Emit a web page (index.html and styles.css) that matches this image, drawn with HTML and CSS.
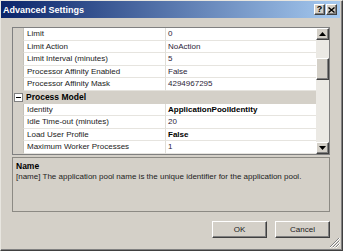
FILE: index.html
```html
<!DOCTYPE html>
<html lang="en">

<head>
    <meta charset="UTF-8">
    <title>Advanced Settings</title>
    <link rel="stylesheet" href="styles.css">
</head>

<body>
    <div class="window">
        <div class="titlebar">
            <span class="title">Advanced Settings</span>
            <div class="caption-btns">
                <span class="cap-btn help">?</span>
                <span class="cap-btn close">
                    <svg width="7" height="6" viewBox="0 0 7 6"><path d="M0.5 0.5 L6.5 5.5 M6.5 0.5 L0.5 5.5" stroke="#000" stroke-width="1.4" fill="none"/></svg>
                </span>
            </div>
        </div>

        <div class="body">
            <div class="grid">
                <div class="rows">
                    <div class="row"><span class="gutter"></span><span class="name">Limit</span><span class="value">0</span></div>
                    <div class="row"><span class="gutter"></span><span class="name">Limit Action</span><span class="value">NoAction</span></div>
                    <div class="row"><span class="gutter"></span><span class="name">Limit Interval (minutes)</span><span class="value">5</span></div>
                    <div class="row"><span class="gutter"></span><span class="name">Processor Affinity Enabled</span><span class="value">False</span></div>
                    <div class="row"><span class="gutter"></span><span class="name">Processor Affinity Mask</span><span class="value">4294967295</span></div>
                    <div class="row category">
                        <span class="gutter"><span class="toggle"></span></span>
                        <span class="cat-name">Process Model</span>
                    </div>
                    <div class="row"><span class="gutter"></span><span class="name">Identity</span><span class="value bold">ApplicationPoolIdentity</span></div>
                    <div class="row"><span class="gutter"></span><span class="name">Idle Time-out (minutes)</span><span class="value">20</span></div>
                    <div class="row"><span class="gutter"></span><span class="name">Load User Profile</span><span class="value bold">False</span></div>
                    <div class="row"><span class="gutter"></span><span class="name">Maximum Worker Processes</span><span class="value">1</span></div>
                </div>
                <div class="scrollbar">
                    <span class="sb-btn">
                        <svg width="7" height="4" viewBox="0 0 7 4"><path d="M3.5 0 L7 4 L0 4 Z" fill="#000"/></svg>
                    </span>
                    <div class="track">
                        <span class="thumb"></span>
                    </div>
                    <span class="sb-btn">
                        <svg width="7" height="4" viewBox="0 0 7 4"><path d="M0 0 L7 0 L3.5 4 Z" fill="#000"/></svg>
                    </span>
                </div>
            </div>

            <div class="desc">
                <h4>Name</h4>
                <p>[name] The application pool name is the unique identifier for the application pool.</p>
            </div>

            <div class="actions">
                <button class="btn">OK</button>
                <button class="btn">Cancel</button>
            </div>
        </div>

        <svg class="grip" width="11" height="11" viewBox="0 0 11 11">
            <path d="M10 1 L1 10 M10 4 L4 10 M10 7 L7 10" stroke="#808080" stroke-width="1" fill="none"/>
            <path d="M11 1 L1 11 M11 4 L4 11 M11 7 L7 11" stroke="#fff" stroke-width="1" fill="none"/>
        </svg>
    </div>
</body>

</html>
```

FILE: styles.css
```css
* {
    margin: 0;
    padding: 0;
    box-sizing: border-box;
}

body {
    background: #d4d0c8;
    font-family: "Liberation Sans", Arial, sans-serif;
    font-size: 8px;
    color: #222;
}

.window {
    position: relative;
    width: 343px;
    height: 251px;
    display: flex;
    flex-direction: column;
    background: #d4d0c8;
    border-top: 1px solid #e8e6e0;
    border-left: 1px solid #e8e6e0;
    border-right: 1px solid #404040;
    border-bottom: 1px solid #404040;
    padding: 0 2px 2px 0;
    box-shadow: inset -1px -1px #808080;
}

/* 标题栏 */
.titlebar {
    height: 17px;
    display: flex;
    align-items: center;
    justify-content: space-between;
    padding: 0 3px 0 2px;
    background: linear-gradient(to right, #0a246a, #a6caf0);
}

.title {
    color: #fff;
    font-weight: bold;
    font-size: 9px;
}

.caption-btns {
    display: flex;
    gap: 1px;
}

.cap-btn {
    width: 11px;
    height: 11px;
    display: flex;
    align-items: center;
    justify-content: center;
    background: #d4d0c8;
    border-top: 1px solid #fff;
    border-left: 1px solid #fff;
    border-right: 1px solid #404040;
    border-bottom: 1px solid #404040;
    box-shadow: inset -1px -1px #808080;
    font-weight: bold;
    font-size: 9px;
    color: #000;
    line-height: 1;
}

.body {
    flex: 1;
    padding: 9px 10px 0 11px;
}

/* 属性表格 */
.grid {
    height: 128px;
    display: flex;
    border: 1px solid #808080;
    background: #fff;
}

.rows {
    flex: 1;
    display: flex;
    flex-direction: column;
}

.row {
    height: 12.6px;
    display: grid;
    grid-template-columns: 10px 143px 1fr;
    align-items: center;
    line-height: 12px;
}

.gutter {
    height: 100%;
    background: #d4d0c8;
    display: flex;
    align-items: center;
    justify-content: center;
}

.name,
.value {
    height: 100%;
    padding-left: 3px;
    border-bottom: 1px solid #e6e4df;
    white-space: nowrap;
    overflow: hidden;
}

.name {
    border-left: 1px solid #c4c1b9;
    border-right: 1px solid #e0ded8;
}

.value {
    padding-left: 2px;
    color: #2c2438;
}

.bold {
    font-weight: bold;
    color: #000;
}

.row.category {
    background: #d4d0c8;
}

.cat-name {
    grid-column: 2 / 4;
    padding-left: 3px;
    font-weight: bold;
    font-size: 8.5px;
    color: #000;
}

.toggle {
    position: relative;
    width: 9px;
    height: 9px;
    border: 1px solid #808080;
    background: #fff;
}

.toggle::after {
    content: "";
    position: absolute;
    left: 1px;
    top: 3px;
    width: 5px;
    height: 1px;
    background: #000;
}

/* 滚动条 */
.scrollbar {
    width: 13px;
    display: flex;
    flex-direction: column;
    background: #ebe9e4;
}

.sb-btn,
.thumb {
    display: flex;
    align-items: center;
    justify-content: center;
    height: 12px;
    background: #d4d0c8;
    border-top: 1px solid #fff;
    border-left: 1px solid #fff;
    border-right: 1px solid #404040;
    border-bottom: 1px solid #404040;
    box-shadow: inset -1px -1px #808080;
}

.track {
    flex: 1;
    padding-top: 18px;
}

.thumb {
    height: 22px;
}

/* 说明区 */
.desc {
    height: 55px;
    margin-top: 2px;
    border: 1px solid #8c8a84;
    padding: 3px 3px;
}

.desc h4 {
    font-size: 8.5px;
    font-weight: bold;
    color: #000;
    line-height: 10px;
}

.desc p {
    margin-top: 1px;
    line-height: 10px;
    color: #222;
}

.actions {
    margin-top: 9px;
    display: flex;
    justify-content: flex-end;
    gap: 8px;
}

.btn {
    width: 55px;
    height: 17px;
    font-family: "Liberation Sans", Arial, sans-serif;
    font-size: 8px;
    color: #222;
    background: #d4d0c8;
    border-top: 1px solid #fff;
    border-left: 1px solid #fff;
    border-right: 1px solid #404040;
    border-bottom: 1px solid #404040;
    box-shadow: inset -1px -1px #808080;
}

.grip {
    position: absolute;
    right: 2px;
    bottom: 2px;
}
```
